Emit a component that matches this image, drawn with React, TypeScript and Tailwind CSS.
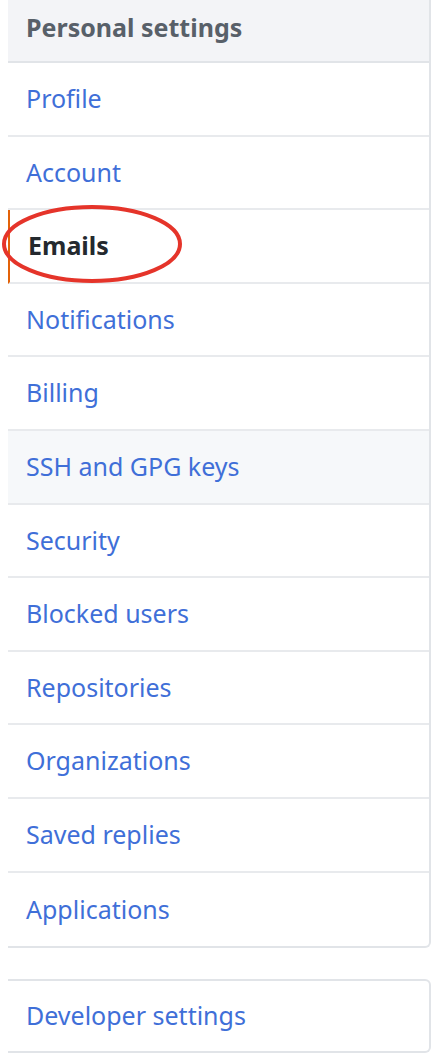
const items = [
  "Profile",
  "Account",
  "Emails",
  "Notifications",
  "Billing",
  "SSH and GPG keys",
  "Security",
  "Blocked users",
  "Repositories",
  "Organizations",
  "Saved replies",
  "Applications",
];

export default function App() {
  return (
    <div
      className="relative h-[1058px] w-[440px] overflow-hidden bg-white pl-2 pr-[9px]"
      style={{ fontFamily: '"Noto Sans", "Open Sans", sans-serif' }}
    >
      <nav className="mt-[-11px] rounded-br-md border-r-2 border-b-2 border-[#e1e4e8]">
        <div className="flex h-[74px] items-center border-b-2 border-[#e1e4e8] bg-[#f3f4f7] pt-[5px] pl-[18px] text-[25px] font-bold text-[#586069]">
          Personal settings
        </div>
        {items.map((item, i) => {
          const selected = item === "Emails";
          const last = i === items.length - 1;
          return (
            <div
              key={item}
              className={
                "flex h-[73.6px] items-center pl-[18px] text-[25px] " +
                (last ? "" : "border-b-2 border-[#e8eaed] ") +
                (selected
                  ? "border-l-2 border-l-[#e36209] pl-[15px] font-bold text-[#24292e]"
                  : item === "SSH and GPG keys"
                  ? "bg-[#f6f8fa] text-[#3f6fd8]"
                  : "text-[#3f6fd8]")
              }
            >
              {item}
            </div>
          );
        })}
      </nav>

      <div className="mt-[31px] flex h-[74px] items-center rounded-r-md border-y-2 border-r-2 border-[#e1e4e8] pl-[18px] text-[25px] text-[#3f6fd8]">
        Developer settings
      </div>

      <svg
        className="pointer-events-none absolute top-[203px] left-0"
        width="186"
        height="82"
        viewBox="0 0 186 82"
      >
        <ellipse
          cx="92"
          cy="41"
          rx="88"
          ry="37"
          fill="none"
          stroke="#e5342a"
          strokeWidth="4"
        />
      </svg>
    </div>
  );
}
